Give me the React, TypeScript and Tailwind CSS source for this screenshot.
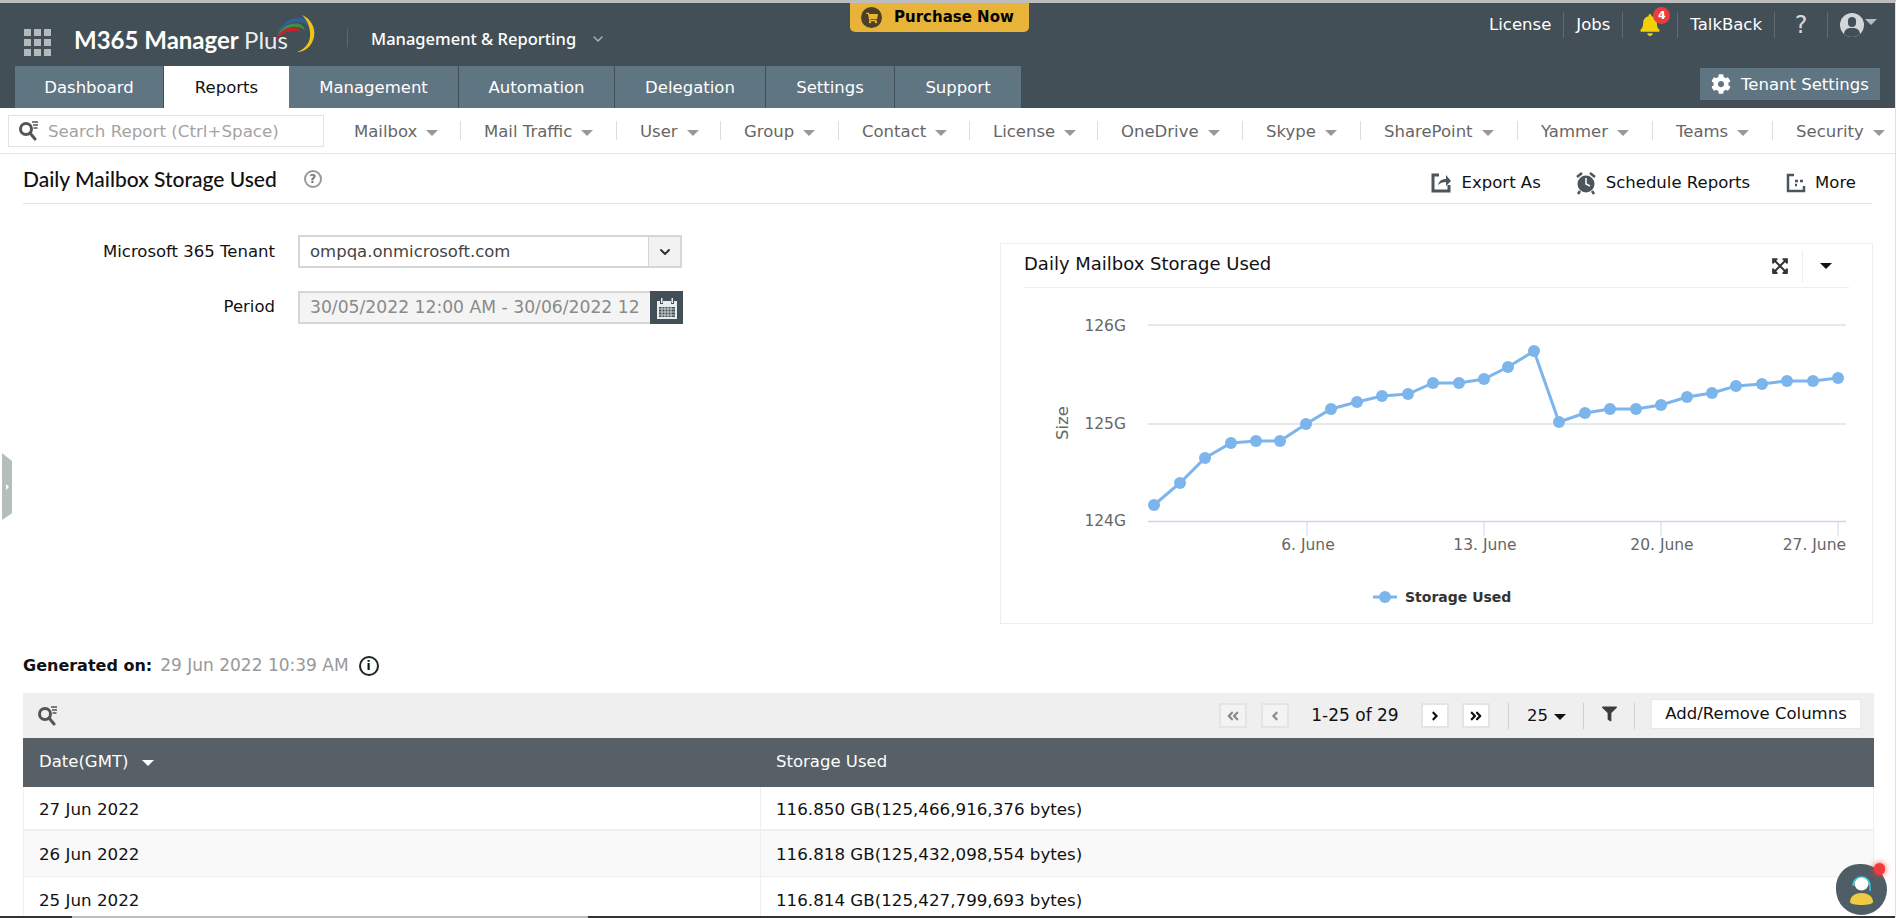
import React from 'react';
import { ChevronDown } from 'lucide-react';
import {
  FaAngleDoubleLeft,
  FaAngleDoubleRight,
  FaAngleLeft,
  FaAngleRight,
  FaBell,
  FaCog,
  FaExpandArrowsAlt,
  FaFilter,
  FaShoppingCart,
} from 'react-icons/fa';

const tabs = [
  { label: 'Dashboard', w: 'w-[149px]' },
  { label: 'Reports', w: 'w-[125px]', active: true },
  { label: 'Management', w: 'w-[170px]' },
  { label: 'Automation', w: 'w-[156px]' },
  { label: 'Delegation', w: 'w-[151px]' },
  { label: 'Settings', w: 'w-[129px]' },
  { label: 'Support', w: 'w-[127px]' },
];

const reportMenus = [
  { label: 'Mailbox', w: 'w-[130px]' },
  { label: 'Mail Traffic', w: 'w-[156px]' },
  { label: 'User', w: 'w-[104px]' },
  { label: 'Group', w: 'w-[118px]' },
  { label: 'Contact', w: 'w-[131px]' },
  { label: 'License', w: 'w-[128px]' },
  { label: 'OneDrive', w: 'w-[145px]' },
  { label: 'Skype', w: 'w-[118px]' },
  { label: 'SharePoint', w: 'w-[157px]' },
  { label: 'Yammer', w: 'w-[135px]' },
  { label: 'Teams', w: 'w-[120px]' },
  { label: 'Security', w: 'w-[120px]' },
];

const rows = [
  { date: '27 Jun 2022', used: '116.850 GB(125,466,916,376 bytes)', cls: 'h-[44px] border-b-2 border-[#f0f0f0]' },
  { date: '26 Jun 2022', used: '116.818 GB(125,432,098,554 bytes)', cls: 'h-[46px] bg-[#f9f9f9] border-b border-[#eeeeee]' },
  { date: '25 Jun 2022', used: '116.814 GB(125,427,799,693 bytes)', cls: 'h-[44px]' },
];

const points: [number, number][] = [
  [1154, 506], [1180, 484], [1205, 459], [1231, 444], [1256, 442], [1280, 442], [1306, 425], [1331, 410],
  [1357, 403], [1382, 397], [1408, 395], [1433, 384], [1459, 384], [1484, 380], [1508, 368], [1534, 352],
  [1559, 423], [1585, 414], [1610, 410], [1636, 410], [1661, 406], [1687, 398], [1712, 394], [1736, 387],
  [1762, 385], [1787, 382], [1813, 382], [1838, 379],
];

const Caret = ({ className }: { className: string }) => (
  <span className={`inline-block w-0 h-0 border-x-[6px] border-x-transparent border-t-[6px] ${className}`} />
);

const SearchIcon = ({ color }: { color: string }) => (
  <svg width="22" height="20" viewBox="0 0 22 20" fill="none" className="shrink-0">
    <circle cx="8" cy="8" r="5.5" stroke={color} strokeWidth="3" />
    <path d="M12 12l5 6" stroke={color} strokeWidth="3" strokeLinecap="round" />
    <path d="M14 1h6M15 4h5M15.500 7h4" stroke={color} strokeWidth="1.300" />
  </svg>
);

const Logo = () => (
  <svg width="44" height="42" viewBox="0 0 44 42" fill="none" className="absolute left-[273px] top-[11px]">
    <path d="M29 1c8 3 14 12 12 22-2 9-9 15-17 15 6-2 12-7 13-15 1-9-3-17-8-22z" fill="#eec41c" />
    <path d="M5 19c3-10 13-16 24-15 4 2 6 6 7 10-5-8-18-10-31 5z" fill="#2f5f9e" />
    <path d="M5 21c3-8 12-13 22-11 2 1 4 3 5 6-7-5-17-5-27 5z" fill="#3f8f3f" />
    <path d="M3 26c2-8 11-14 20-12 3 1 4 2 5 4-8-3-17-1-25 8z" fill="#c8202c" />
  </svg>
);

const PagerButton = ({ disabled, children }: { disabled?: boolean; children: React.ReactNode }) => (
  <span
    className={`flex items-center justify-center w-[28px] h-[25px] border-2 border-[#e4e4e4] ${
      disabled ? 'bg-[#f3f3f3] text-[#8a8a8a]' : 'bg-white text-[#111111]'
    }`}
  >
    {children}
  </span>
);

const StorageChart = () => (
  <svg width="871" height="334" viewBox="1001 289 871 334" className="block">
    <line x1="1148" x2="1846" y1="326" y2="326" stroke="#e0e0e0" strokeWidth="1.500" />
    <line x1="1148" x2="1846" y1="425" y2="425" stroke="#e0e0e0" strokeWidth="1.500" />
    <line x1="1148" x2="1846" y1="522.500" y2="522.500" stroke="#ccd6eb" strokeWidth="1.500" />
    {[1307, 1484, 1661, 1838].map((x) => (
      <line key={x} x1={x} x2={x} y1="522" y2="537" stroke="#ccd6eb" strokeWidth="1" />
    ))}
    <g fontFamily="'DejaVu Sans', sans-serif" fontSize="15.500" fill="#666666">
      <text x="1126" y="332" textAnchor="end">126G</text>
      <text x="1126" y="430" textAnchor="end">125G</text>
      <text x="1126" y="527" textAnchor="end">124G</text>
      <text x="1308" y="551" textAnchor="middle">6. June</text>
      <text x="1485" y="551" textAnchor="middle">13. June</text>
      <text x="1662" y="551" textAnchor="middle">20. June</text>
      <text x="1846" y="551" textAnchor="end">27. June</text>
      <text x="0" y="0" fontSize="16.500" transform="translate(1068 424) rotate(-90)" textAnchor="middle">Size</text>
    </g>
    <polyline points={points.map((p) => p.join(',')).join(' ')} fill="none" stroke="#7cb5ec" strokeWidth="3" />
    {points.map(([x, y]) => (
      <circle key={x} cx={x} cy={y} r="6" fill="#7cb5ec" />
    ))}
    <line x1="1373" x2="1397" y1="598" y2="598" stroke="#7cb5ec" strokeWidth="3" />
    <circle cx="1385" cy="598" r="6" fill="#7cb5ec" />
    <text x="1405" y="603" fontFamily="'DejaVu Sans', sans-serif" fontSize="14" fontWeight="700" fill="#333333">Storage Used</text>
  </svg>
);

export default function App() {
  return (
    <div className="relative h-[918px] overflow-hidden bg-white border-t-[3px] border-r border-t-[#bdbdbd] border-r-[#e0e0e0] font-['DejaVu_Sans',sans-serif] text-[16.500px] text-[#111111]">
      <header className="relative bg-[#434f57] h-[105px] flex flex-col">
        <div className="relative h-[63px] flex items-start">
          <div className="ml-[24px] mt-[26px] grid grid-cols-3 gap-[3px]">
            {[0, 1, 2, 3, 4, 5, 6, 7, 8].map((i) => (
              <span key={i} className="w-[7px] h-[7px] bg-[#b4b9bc]" />
            ))}
          </div>
          <div className="ml-[23px] mt-[21px] font-['Lato',sans-serif] text-[24px] leading-[32px] text-white font-bold">
            M365 Manager <span className="font-normal text-[#e8ecee]">Plus</span>
          </div>
          <Logo />
          <span className="absolute left-[347px] top-[26px] h-[18px] w-px bg-[#5c676e]" />
          <div className="absolute left-[371px] top-[24px] flex items-center font-['Noto_Sans',sans-serif] text-[16.500px] leading-[24px] font-medium text-white">
            Management &amp; Reporting
            <ChevronDown className="ml-[14px] w-[16px] h-[16px] text-[#aeb5b9]" />
          </div>

          <div className="ml-auto mr-[18px] mt-[9px] flex items-center h-[26px] text-white">
            <span className="pr-[12px] border-r border-[#5f6a71] leading-[26px]">License</span>
            <span className="px-[12px] border-r border-[#5f6a71] leading-[26px]">Jobs</span>
            <span className="relative w-[55px] h-[26px] border-r border-[#5f6a71] flex items-center pl-[16px]">
              <FaBell className="text-[#f2cf07] w-[22px] h-[22px]" />
              <span className="absolute left-[30px] top-[-5px] w-[17px] h-[17px] rounded-full bg-[#ef3b3b] text-white text-[11px] leading-[17px] text-center font-bold">4</span>
            </span>
            <span className="px-[12px] border-r border-[#5f6a71] leading-[26px]">TalkBack</span>
            <span className="w-[53px] text-center border-r border-[#5f6a71] text-[#d5d9db] text-[24px] leading-[26px]">?</span>
            <span className="relative ml-[12px] w-[24px] h-[24px] rounded-full bg-[#d4d7d9] overflow-hidden">
              <span className="absolute left-[8px] top-[4px] w-[8px] h-[10px] rounded-full bg-[#434f57]" />
              <span className="absolute left-[4px] top-[15px] w-[16px] h-[12px] rounded-full bg-[#434f57]" />
            </span>
            <Caret className="ml-[1px] -mt-[7px] border-t-[#b7bcbf]" />
          </div>
        </div>

        <div className="h-[42px] flex pl-[15px]">
          {tabs.map((tab) => (
            <div
              key={tab.label}
              className={`${tab.w} pt-[2px] flex items-center justify-center text-[16.500px] ${
                tab.active ? 'bg-white text-[#111111]' : 'bg-[#5f7582] text-white border-r border-[#434f57]'
              }`}
            >
              {tab.label}
            </div>
          ))}
          <div className="ml-auto mr-[15px] mt-[2px] w-[180px] h-[32px] bg-[#5f7582] text-white flex items-center pl-[11px] gap-[10px] text-[16.500px] whitespace-nowrap">
            <FaCog className="w-[20px] h-[20px] shrink-0" />
            <span className="pt-[2px]">Tenant Settings</span>
          </div>
        </div>

        <div className="absolute left-[850px] top-0 w-[179px] h-[29px] rounded-b-[5px] bg-[#e8b339] flex items-center pl-[11px]">
          <span className="w-[21px] h-[21px] rounded-full bg-[#4b4124] flex items-center justify-center">
            <FaShoppingCart className="w-[12px] h-[12px] text-[#e8b339]" />
          </span>
          <span className="ml-[12px] text-[15px] font-bold text-black">Purchase Now</span>
        </div>
      </header>

      <nav className="h-[46px] border-b border-[#e6e6e6] flex items-center pl-[8px]">
        <div className="w-[316px] shrink-0 h-[32px] border border-[#e3e3e3] flex items-center pl-[9px] gap-[8px] mr-[7px]">
          <SearchIcon color="#555555" />
          <span className="pt-[2px] text-[#a3a3a3] text-[16.700px] whitespace-nowrap">Search Report (Ctrl+Space)</span>
        </div>
        {reportMenus.map((menu, i) => (
          <div
            key={menu.label}
            className={`${menu.w} shrink-0 flex items-center h-[19px] pl-[23px] gap-[9px] text-[#666666] text-[16.500px] whitespace-nowrap ${
              i < reportMenus.length - 1 ? 'border-r border-[#dddddd]' : ''
            }`}
          >
            <span className="mt-[4px]">{menu.label}</span>
            <Caret className="mt-[4px] border-t-[#999999]" />
          </div>
        ))}
      </nav>

      <div className="h-[50px] mx-[23px] border-b border-[#e3e3e3] flex items-center">
        <h1 className="font-['Lato',sans-serif] text-[21px] font-medium text-[#111111]">Daily Mailbox Storage Used</h1>
        <span className="ml-[27px] w-[18px] h-[18px] rounded-full border-2 border-[#999999] text-[#777777] text-[12px] leading-[14px] text-center font-bold">?</span>
        <div className="ml-auto flex items-center mt-[9px]">
          <svg width="20" height="20" viewBox="0 0 20 20" fill="none" className="mr-[11px]">
            <path d="M8 2H2v16h16v-6" stroke="#4a555c" strokeWidth="3" />
            <path d="M7 12c1-4 4-6 8-6V2l5 6-5 5V9c-3 0-6 1-8 3z" fill="#4a555c" />
          </svg>
          Export As
          <svg width="22" height="24" viewBox="0 0 22 24" className="ml-[34px] mr-[9px]">
            <circle cx="11" cy="13" r="8.500" fill="#4a555c" />
            <path d="M11 7v6l4 2" stroke="#ffffff" strokeWidth="1.500" fill="none" />
            <path d="M2 6l5-4M20 6l-5-4M5 20l-2 3M17 20l2 3" stroke="#4a555c" strokeWidth="2.500" />
          </svg>
          Schedule Reports
          <svg width="20" height="20" viewBox="0 0 20 20" fill="none" className="ml-[36px] mr-[9px]">
            <path d="M8 2H2v16h16v-5" stroke="#4a555c" strokeWidth="2.500" />
            <path d="M9 8h3M14 8h3M9 12h2" stroke="#4a555c" strokeWidth="2.500" />
          </svg>
          <span className="mr-[16px]">More</span>
        </div>
      </div>

      <section className="flex items-start pt-[39px]">
        <div className="ml-[23px] w-[660px] -mt-[8px] grid grid-cols-[252px_384px] gap-x-[23px] gap-y-[23px] items-center">
          <label className="pt-[2px] text-right whitespace-nowrap">Microsoft 365 Tenant</label>
          <div className="h-[33px] border-2 border-[#d6d6d6] flex items-center">
            <span className="flex-1 pl-[10px] pt-[2px] text-[#444444]">ompqa.onmicrosoft.com</span>
            <span className="w-[32px] h-full bg-[#f2f2f2] border-l border-[#d6d6d6] flex items-center justify-center">
              <ChevronDown className="w-[16px] h-[16px] text-[#333333]" strokeWidth={3} />
            </span>
          </div>
          <label className="text-right">Period</label>
          <div className="h-[33px] flex w-[385px]">
            <span className="w-[352px] border-2 border-r-0 border-[#d6d6d6] bg-[#f4f4f4] text-[#8a8a8a] text-[17.200px] pl-[10px] leading-[29px] whitespace-nowrap overflow-hidden">30/05/2022 12:00 AM - 30/06/2022 12</span>
            <span className="w-[33px] bg-[#434f57] flex items-center justify-center">
              <svg width="22" height="24" viewBox="0 0 22 24">
                <path d="M1 5h3v3h3V5h8v3h3V5h3v18H1z" fill="#e9ecee" />
                <path d="M5 2h1.500v5H5zM15.500 2H17v5h-1.500z" fill="#e9ecee" />
                <rect x="3" y="11" width="16" height="10" fill="#434f57" />
                <path d="M3 13h16M3 16h16M3 19h16M6 11v10M9 11v10M12 11v10M15 11v10" stroke="#e9ecee" strokeWidth="0.800" />
              </svg>
            </span>
          </div>
        </div>

        <div className="ml-[317px] w-[873px] h-[381px] border border-[#eeeeee]">
          <div className="mx-[23px] h-[44px] border-b border-[#eeeeee] flex items-center">
            <span className="-mt-[4px] text-[18px] text-[#111111]">Daily Mailbox Storage Used</span>
            <FaExpandArrowsAlt className="ml-auto w-[18px] h-[18px] text-[#333333]" />
            <span className="ml-[13px] w-px h-[32px] bg-[#eeeeee]" />
            <Caret className="ml-[17px] mr-[17px] border-t-[#111111] border-x-[6px] border-t-[6px]" />
          </div>
          <StorageChart />
        </div>
      </section>

      <div className="mx-[23px] mt-[30px] h-[24px] flex items-center text-[16px]">
        <span className="font-bold">Generated on:</span>
        <span className="ml-[8px] text-[#999999] text-[17px]">29 Jun 2022 10:39 AM</span>
        <span className="ml-[10px] w-[20px] h-[20px] rounded-full border-2 border-[#222222] flex items-center justify-center font-bold text-[12px]">i</span>
      </div>

      <div className="mx-[23px] mt-[15px] mr-[21px]">
        <div className="h-[45px] bg-[#efefef] flex items-center pl-[14px] pr-[13px]">
          <SearchIcon color="#555555" />
          <div className="ml-auto flex items-center h-[27px] text-[16.500px]">
            <PagerButton disabled><FaAngleDoubleLeft className="w-[14px] h-[14px]" /></PagerButton>
            <span className="ml-[14px]"><PagerButton disabled><FaAngleLeft className="w-[14px] h-[14px]" /></PagerButton></span>
            <span className="w-[132px] text-center text-[17px]">1-25 of 29</span>
            <PagerButton><FaAngleRight className="w-[14px] h-[14px]" /></PagerButton>
            <span className="ml-[13px]"><PagerButton><FaAngleDoubleRight className="w-[14px] h-[14px]" /></PagerButton></span>
            <span className="ml-[18px] h-[26px] w-px bg-[#cfcfcf]" />
            <span className="ml-[18px] mt-[2px]">25</span>
            <Caret className="ml-[6px] mt-[3px] border-t-[#111111]" />
            <span className="ml-[17px] h-[26px] w-px bg-[#cfcfcf]" />
            <FaFilter className="ml-[18px] mr-[17px] -mt-[4px] w-[15px] h-[16px] text-[#3d3d3d]" />
            <span className="h-[26px] w-px bg-[#cfcfcf]" />
            <span className="ml-[16px] -mt-[3px] w-[210px] h-[30px] bg-white border border-[#e8e8e8] flex items-center justify-center whitespace-nowrap">Add/Remove Columns</span>
          </div>
        </div>
        <div className="h-[49px] bg-[#566066] text-white grid grid-cols-[737px_1fr] items-center text-[16.500px]">
          <span className="pl-[16px] flex items-center gap-[14px]">
            Date(GMT)
            <Caret className="border-x-[5px] border-t-[6px] border-t-white" />
          </span>
          <span className="pl-[16px]">Storage Used</span>
        </div>
        {rows.map((row) => (
          <div key={row.date} className={`grid grid-cols-[737px_1fr] items-stretch border-x border-x-[#f0f0f0] text-[16.700px] ${row.cls}`}>
            <span className="pl-[15px] pt-[3px] flex items-center border-r border-[#eeeeee]">{row.date}</span>
            <span className="pl-[15px] pt-[3px] flex items-center">{row.used}</span>
          </div>
        ))}
      </div>

      <div className="absolute left-[2px] top-[450px] w-[10px] h-[67px] bg-[#b5bdbd] [clip-path:polygon(0_0,100%_12%,100%_90%,0_100%)] flex items-center justify-center">
        <span className="w-0 h-0 border-y-[3px] border-y-transparent border-l-[3px] border-l-white" />
      </div>

      <div className="absolute left-[1836px] top-[861px] w-[51px] h-[51px] rounded-[45%_50%_50%_50%] bg-[#4f5d66]">
        <svg width="51" height="51" viewBox="0 0 51 51" className="absolute inset-0">
          <path d="M17 22c0-12 17-12 17 0v5" fill="none" stroke="#27d3e6" strokeWidth="1.500" />
          <ellipse cx="25.500" cy="20" rx="7" ry="6.500" fill="#ffffff" />
          <path d="M14 38c0-12 23-12 23 0 0 4-23 4-23 0z" fill="#eecb43" />
        </svg>
        <span className="absolute left-[38px] top-[-1px] w-[11px] h-[12px] rounded-full bg-[#ef3b3b] shadow-[0_0_6px_#ef3b3b]" />
      </div>

      <div className="absolute left-0 right-0 bottom-0 h-[2px] flex">
        <span className="w-[72px] bg-[#333333]" />
        <span className="w-[516px] bg-[#bdbdbd]" />
        <span className="flex-1 bg-[#333333]" />
      </div>
    </div>
  );
}
